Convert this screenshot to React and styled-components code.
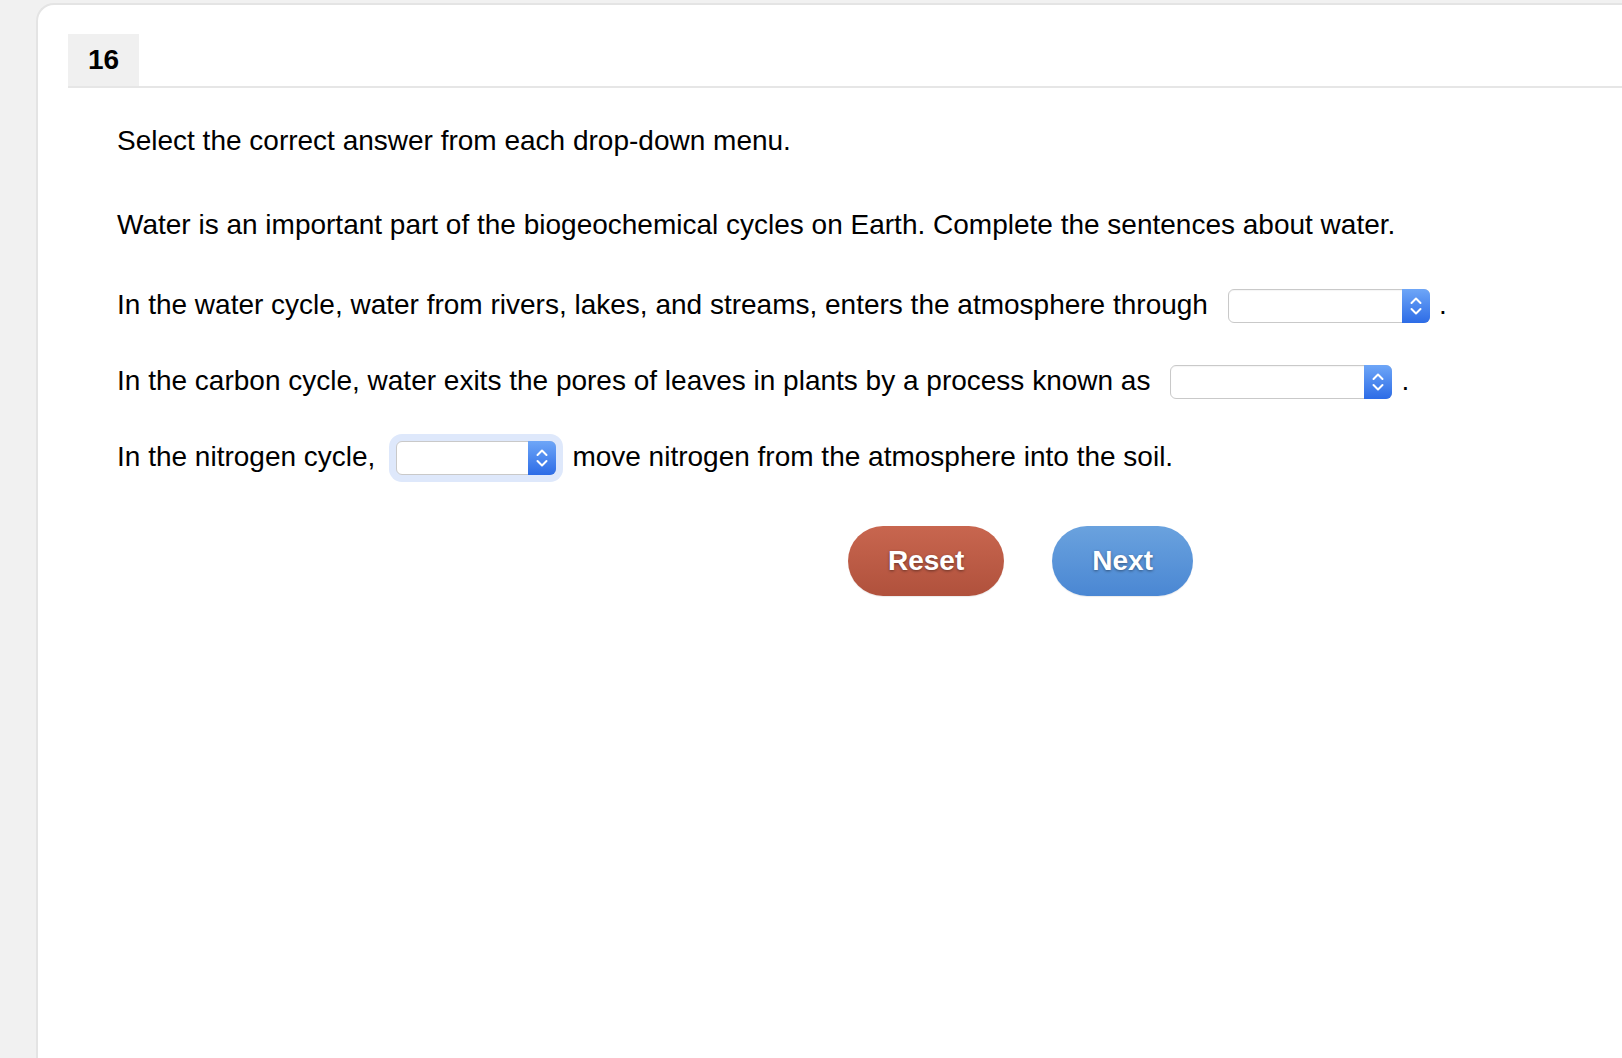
import React from 'react';
import styled, { createGlobalStyle } from 'styled-components';

const GlobalStyle = createGlobalStyle`
  html, body {
    margin: 0;
    padding: 0;
    background: #f1f1f1;
    font-family: "Liberation Sans", Arial, Helvetica, sans-serif;
    color: #000;
  }
`;

const Page = styled.div`
  padding: 3px 0 0 36px;
  height: 100vh;
  box-sizing: border-box;
  overflow: hidden;
`;

const Card = styled.div`
  background: #fff;
  border-top: 2px solid #e4e4e4;
  border-left: 2px solid #e4e4e4;
  border-top-left-radius: 18px;
  padding: 29px 0 0 30px;
  height: calc(100vh - 3px);
  box-sizing: border-box;
`;

const Header = styled.div`
  display: flex;
  border-bottom: 2px solid #e6e6e6;
`;

const Tab = styled.div`
  width: 71px;
  height: 52px;
  background: #f0f0f0;
  display: flex;
  align-items: center;
  justify-content: center;
  font-size: 28px;
  font-weight: bold;
`;

const Body = styled.div`
  padding-left: 49px;
  font-size: 28px;
  line-height: 32px;
`;

const Para = styled.p`
  margin: ${p => p.$top}px 0 0;
`;

const Row = styled.div`
  display: flex;
  align-items: flex-start;
  margin-top: ${p => p.$top}px;
  white-space: nowrap;
`;

const SelectBox = styled.div`
  display: flex;
  width: ${p => p.$width}px;
  height: 34px;
  margin: 0 ${p => p.$after}px 0 ${p => p.$before}px;
  box-sizing: border-box;
  border: 1px solid #c9c9c9;
  border-radius: 6px;
  background: #fff;
  box-shadow: ${p => (p.$focused ? '0 0 0 7px #dee8fb' : 'inset 0 1px 1px rgba(0,0,0,0.04)')};
`;

const Field = styled.select`
  flex: 1;
  appearance: none;
  border: none;
  background: transparent;
  border-radius: 6px 0 0 6px;
  outline: none;
  font: inherit;
  font-size: 16px;
`;

const ArrowPart = styled.div`
  width: 28px;
  margin: -1px -1px -1px 0;
  border-radius: 0 6px 6px 0;
  background: linear-gradient(#6ea6f7, #2d6ce6);
  display: flex;
  align-items: center;
  justify-content: center;
`;

const ButtonBar = styled.div`
  display: flex;
  gap: 48px;
  margin-top: 51px;
  padding-left: 731px;
`;

const Button = styled.button`
  height: 70px;
  padding: 0 40px;
  border: none;
  border-radius: 35px;
  font-family: inherit;
  font-size: 28px;
  font-weight: bold;
  color: #fff;
  text-shadow: 0 1px 3px rgba(0, 0, 0, 0.45);
  background: ${p => p.$tone === 'red'
    ? 'linear-gradient(#c8664f, #b0513c)'
    : 'linear-gradient(#6aa2de, #4a87d3)'};
  box-shadow: 0 1px 1px rgba(0, 0, 0, 0.08);
  cursor: pointer;
`;

function Chevrons() {
  return (
    <svg width="14" height="24" viewBox="0 0 14 24" fill="none">
      <path d="M2.5 9 L7 4.5 L11.5 9" stroke="#fff" strokeWidth="2" strokeLinecap="round" strokeLinejoin="round" />
      <path d="M2.5 15 L7 19.5 L11.5 15" stroke="#fff" strokeWidth="2" strokeLinecap="round" strokeLinejoin="round" />
    </svg>
  );
}

function Dropdown({ width, before, after, focused }) {
  return (
    <SelectBox $width={width} $before={before} $after={after} $focused={focused}>
      <Field defaultValue="">
        <option value=""></option>
      </Field>
      <ArrowPart>
        <Chevrons />
      </ArrowPart>
    </SelectBox>
  );
}

export default function App() {
  return (
    <>
      <GlobalStyle />
      <Page>
        <Card>
          <Header>
            <Tab>16</Tab>
          </Header>
          <Body>
            <Para $top={37}>Select the correct answer from each drop-down menu.</Para>
            <Para $top={52}>
              Water is an important part of the biogeochemical cycles on Earth. Complete the sentences about water.
            </Para>
            <Row $top={48}>
              <span>In the water cycle, water from rivers, lakes, and streams, enters the atmosphere through</span>
              <Dropdown width={202} before={20} after={9} />
              <span>.</span>
            </Row>
            <Row $top={42}>
              <span>In the carbon cycle, water exits the pores of leaves in plants by a process known as</span>
              <Dropdown width={222} before={20} after={9} />
              <span>.</span>
            </Row>
            <Row $top={42}>
              <span>In the nitrogen cycle,</span>
              <Dropdown width={160} before={21} after={16} focused />
              <span>move nitrogen from the atmosphere into the soil.</span>
            </Row>
            <ButtonBar>
              <Button $tone="red">Reset</Button>
              <Button $tone="blue">Next</Button>
            </ButtonBar>
          </Body>
        </Card>
      </Page>
    </>
  );
}
